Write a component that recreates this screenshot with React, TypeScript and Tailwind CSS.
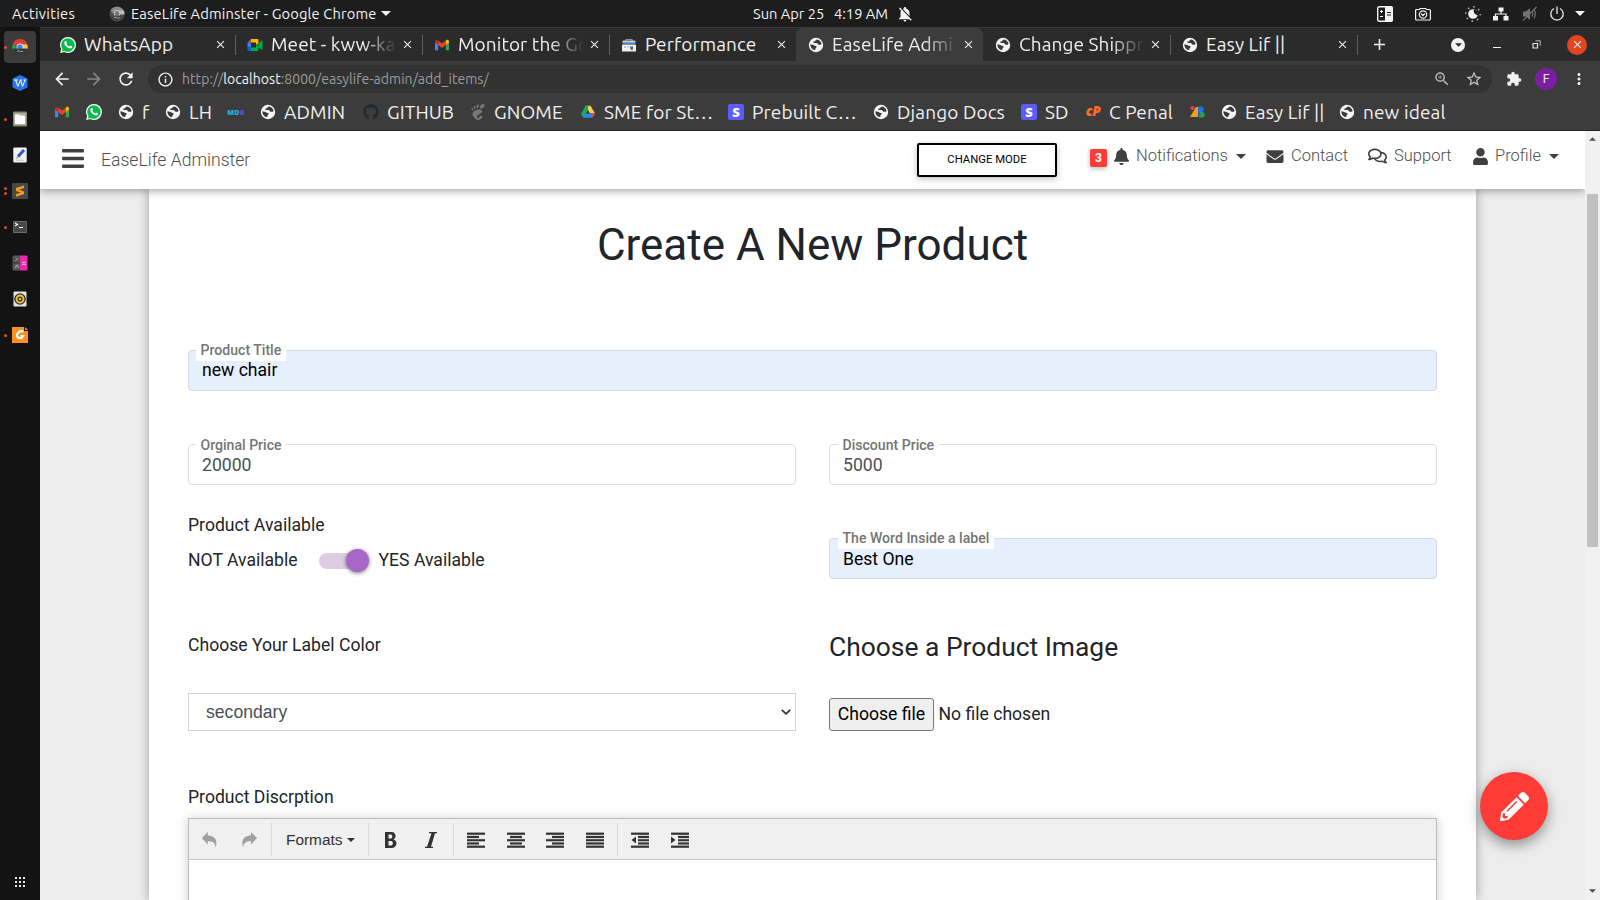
import React from "react";
import {
  MdArrowBack,
  MdArrowForward,
  MdRefresh,
  MdInfoOutline,
  MdZoomIn,
  MdStarBorder,
  MdExtension,
  MdMoreVert,
  MdAdd,
  MdClose,
  MdNotificationsOff,
} from "react-icons/md";
import { FaBars, FaBell, FaEnvelope, FaRegComments, FaUser, FaPencilAlt, FaGithub } from "react-icons/fa";
import { SiGnome } from "react-icons/si";

function Caret({ className }: { className?: string }) {
  return (
    <svg viewBox="0 0 10 5" className={className} fill="currentColor">
      <path d="M0 0h10L5 5z" />
    </svg>
  );
}

function Globe() {
  return (
    <svg viewBox="0 0 16 16" className="h-4 w-4 shrink-0">
      <circle cx="8" cy="8" r="7.2" fill="#f4f4f4" />
      <path d="M9.2 2.4c-1 .2-1.700.5-1.800 1.200.3.700-.8.900-1.600 1-1 .3-.600 1.400.2 1.500h2.600c1.300.2.900 1.600 2.200 1.700h1.700c.700.1 1-.500 1-1.200-.4-2-2.200-3.900-4.300-4.200z" fill="#3a3a3a" />
      <path d="M2.400 7.200c1.500.5 2.900.2 3.900 1.200.7.700 2.300.2 2.400 1.300 0 .9-1.100.9-1.200 1.800 0 .9-.1 1.700-1 1.600-2.400-.5-4.300-3.100-4.100-5.900z" fill="#3a3a3a" />
    </svg>
  );
}

function WhatsApp() {
  return (
    <svg viewBox="0 0 16 16" className="h-4 w-4 shrink-0">
      <path d="M8 0a8 8 0 0 1 0 16c-1.400 0-2.600-.3-3.700-.9L.2 16l1-3.900A8 8 0 0 1 8 0z" fill="#fff" />
      <path d="M8 1.200a6.800 6.800 0 1 1-3.500 12.700l-2.700.7.700-2.600A6.800 6.800 0 0 1 8 1.200z" fill="#07bc4c" />
      <path d="M5.300 4.100c.5-.4 1-.2 1.200.4l.5 1.200c.1.400-.6.900-.5 1.200.6 1.200 1.500 2 2.700 2.500.4 0 .8-.9 1.200-.8l1.400.7c.4.200.2 1.200-.3 1.600-1 .8-2.400.5-4-.5-1.700-1-3.200-3-3.200-4.500 0-.8.500-1.500 1-1.800z" fill="#fff" />
    </svg>
  );
}

function Gmail() {
  return (
    <svg viewBox="0 0 16 16" className="h-4 w-4 shrink-0">
      <path d="M1 4v9.300h3.200V7z" fill="#3f86f5" />
      <path d="M15 4v9.300h-3.200V7z" fill="#32a753" />
      <path d="M1 4.600C1 2.800 2.800 2.300 4.200 3.400V8L1 5.600z" fill="#c6221f" />
      <path d="M15 4.600c0-1.800-1.800-2.300-3.200-1.200V8L15 5.600z" fill="#fbbc04" />
      <path d="M4.200 3.600L8 6.500l3.800-2.900V8L8 10.900 4.200 8z" fill="#ea4335" />
    </svg>
  );
}

function Meet() {
  return (
    <svg viewBox="0 0 16 16" className="h-4 w-4 shrink-0">
      <path d="M4 2L0.500 5.500H4z" fill="#ea4335" />
      <path d="M4 2h6.500a1 1 0 0 1 1 1v4L9 8V5.500H4z" fill="#fbbc04" />
      <path d="M.5 5.500H4v5H.5z" fill="#2684fc" />
      <path d="M.5 10.500H4V14H1.500a1 1 0 0 1-1-1z" fill="#0066da" />
      <path d="M4 10.500h5V8l2.500-1 3-3.500c.4-.2 1 0 1 .5v8c0 .5-.6.700-1 .4L11.500 10v3a1 1 0 0 1-1 1H4z" fill="#00ac47" />
      <path d="M11.500 6v4L9 8z" fill="#00832d" />
    </svg>
  );
}

function Console() {
  return (
    <svg viewBox="0 0 16 16" className="h-4 w-4 shrink-0">
      <path d="M5 4V2.500h6V4" stroke="#8a8f94" strokeWidth="1.200" fill="none" />
      <rect x="1.500" y="3.500" width="13" height="3" rx="1" fill="#c6cacd" />
      <rect x="2" y="5.500" width="12" height="1.500" fill="#3c87dc" />
      <rect x="1" y="7.500" width="14" height="7" rx=".5" fill="#eef0f1" />
      <path d="M4 9v2M7 9v1.500" stroke="#97a4ae" />
      <path d="M9 9l2 1 1-1v3l-1 1.500L9.500 12z" fill="#4d5a64" />
    </svg>
  );
}

function Drive() {
  return (
    <svg viewBox="0 0 16 16" className="h-4 w-4 shrink-0">
      <path d="M5.500 1.800h5L15 9.600h-5z" fill="#ffcf48" />
      <path d="M3.500 9.600H15l-2.400 4.200H3.300L1 9.700z" fill="#2f86f6" />
      <path d="M1 9.700L5.500 1.800h2.700v4.600L3.400 13.800z" fill="#1fa463" />
      <path d="M10.800 9.600H15l-2.400 4.200z" fill="#ea4335" />
      <path d="M8 6.500l1.800 3.100H6.200z" fill="#3c3c3c" />
    </svg>
  );
}

function SBadge() {
  return (
    <span className="flex h-4 w-4 shrink-0 items-center justify-center rounded-[2px] bg-[#5b5bff] font-['Noto_Sans',sans-serif] text-[13px] leading-none font-black text-white">
      S
    </span>
  );
}

function Mdb() {
  return (
    <span className="flex h-4 w-4 shrink-0 items-center justify-center font-['Noto_Sans',sans-serif] text-[7px] leading-none font-black tracking-[0.3px] text-[#19b5dd]">
      MD<span className="text-[#5a4fcf]">B</span>
    </span>
  );
}

function CPanel() {
  return (
    <span className="flex h-4 w-4 shrink-0 items-center justify-center font-['Noto_Sans',sans-serif] text-[13.500px] leading-none font-black tracking-[-0.300px] text-[#ff6c2c] italic">
      cP
    </span>
  );
}

function Zb() {
  return (
    <svg viewBox="0 0 16 16" className="h-4 w-4 shrink-0">
      <circle cx="2.500" cy="4" r="2" fill="#e8443a" />
      <path d="M0 13L6 3h2v10z" fill="#f79a1c" />
      <path d="M8 2.500h3.500a2.800 2.800 0 0 1 0 5.500H8z" fill="#1a73e8" />
      <path d="M9 8h3a2.700 2.700 0 0 1 0 5.500H9z" fill="#2aa24a" />
      <path d="M8 8l3 2-3 3z" fill="#1565c0" />
    </svg>
  );
}

function ChromeDev({ grey }: { grey?: boolean }) {
  return grey ? (
    <svg viewBox="0 0 16 16" className="h-4 w-4 shrink-0">
      <circle cx="8" cy="8" r="7.500" fill="#505050" />
      <path d="M1.500 4.500a7.500 7.500 0 0 1 13 0l.8 2.500H4z" fill="#8c8c8c" />
      <path d="M8 4.500h7a7 7 0 0 1 .3 4H11z" fill="#bcbcbc" />
      <circle cx="8" cy="7.500" r="3.200" fill="#d0d0d0" />
      <circle cx="8" cy="7.500" r="2.400" fill="#777" />
      <path d="M1.200 9.500h13.600a7 7 0 0 1-13.600 0z" fill="#444" />
      <path d="M5.500 11.500h2M8.500 11.500l1 1 1-1" stroke="#ddd" strokeWidth=".8" fill="none" />
    </svg>
  ) : (
    <svg viewBox="0 0 16 16" className="h-4 w-4 shrink-0">
      <path d="M1 4.500a7.700 7.700 0 0 1 14 0v2H3z" fill="#dc4034" />
      <path d="M1 4.500L5 9l-1 2H.5a8 8 0 0 1 .5-6.500z" fill="#2da14e" />
      <path d="M9 5.500h6.300a8 8 0 0 1 .2 4.500H10z" fill="#fcc934" />
      <circle cx="8" cy="8" r="3.500" fill="#f4f4f4" />
      <circle cx="8" cy="8" r="2.800" fill="#4285f4" />
      <path d="M.6 9.500h14.800a7.700 7.700 0 0 1-14.800 0z" fill="#393939" />
      <path d="M5.500 12h2M8.500 12l1 1 1-1" stroke="#eee" strokeWidth=".8" fill="none" />
    </svg>
  );
}

function SystemBar() {
  return (
    <header className="flex h-[27px] shrink-0 items-center bg-[#1d1d1d] pl-3 text-[14.670px] text-[#f2f2f2]">
      <span className="w-[97px] tracking-[0.300px]">Activities</span>
      <ChromeDev grey />
      <span className="ml-1.5 w-[250px] tracking-[0.150px] whitespace-nowrap">EaseLife Adminster - Google Chrome</span>
      <Caret className="h-[5px] w-[10px]" />
      <span className="ml-[362px] w-[81px] whitespace-nowrap">Sun Apr 25</span>
      <span className="w-[62px] whitespace-nowrap">4:19 AM</span>
      <MdNotificationsOff className="h-[18px] w-[18px]" />
      <div className="ml-auto flex items-center pr-[15px]">
        <svg viewBox="0 0 16 16" className="mr-[22px] h-4 w-4">
          <rect x=".7" y=".7" width="14.600" height="14.600" rx="1.500" fill="none" stroke="#f2f2f2" strokeWidth="1.400" />
          <path d="M8 0h6.500L16 1.500v13L14.500 16H8z" fill="#f2f2f2" />
          <path d="M4.500 4v3M3 5.500h3M3 10.500h3" stroke="#f2f2f2" strokeWidth="1" />
          <path d="M10 6.500h4M10 9h4" stroke="#1d1d1d" strokeWidth="1.200" />
        </svg>
        <svg viewBox="0 0 16 16" className="mr-[34px] h-4 w-4" fill="none" stroke="#f2f2f2" strokeWidth="1.200">
          <path d="M1.600 3.500h3l.6-1h5.600l.6 1h3a1 1 0 0 1 1 1V13a1 1 0 0 1-1 1H1.600a1 1 0 0 1-1-1V4.500a1 1 0 0 1 1-1z" />
          <circle cx="8" cy="8.500" r="3.700" />
          <path d="M6.200 7.500l1.800 2 1.800-2" />
        </svg>
        <svg viewBox="0 0 16 16" className="mr-[12px] h-4 w-4">
          <circle cx="8" cy="8" r="4.800" fill="#f2f2f2" />
          <path d="M9 3.300a4 4 0 0 0 4 5.700A5 5 0 0 0 9 3.300z" fill="#1d1d1d" />
          <circle cx="8" cy="8" r="7.200" fill="none" stroke="#bdbdbd" strokeWidth="1.400" strokeDasharray="1.500 4.150" />
        </svg>
        <svg viewBox="0 0 16 16" className="mr-[13px] h-4 w-4" fill="#f2f2f2">
          <path d="M5.500 1.500h5v4h-5zM0 10h5v4.500H0zM10.500 10h5v4.500h-5z" />
          <path d="M8 5v3M2.500 10V8H13v2" fill="none" stroke="#f2f2f2" strokeWidth="1.200" />
        </svg>
        <svg viewBox="0 0 16 16" className="mr-[11px] h-4 w-4" fill="#737373">
          <path d="M1 5.500h3L8 2v12l-4-3.500H1z" />
          <path d="M10 5.500q1.500 2.500 0 5M12 3.500q2.700 4.500 0 9M1 14.500L14.500 1" fill="none" stroke="#737373" strokeWidth="1.200" />
        </svg>
        <svg viewBox="0 0 16 16" className="mr-[10px] h-4 w-4" fill="none" stroke="#e8e8e8" strokeWidth="1.300">
          <path d="M5 2.500a6.200 6.200 0 1 0 6 0M8 .5V8" />
        </svg>
        <Caret className="h-[5px] w-[10px]" />
      </div>
    </header>
  );
}

function DockItem({ dots = 0, active, children }: { dots?: number; active?: boolean; children: React.ReactNode }) {
  return (
    <div className="flex h-9 items-center">
      <div className="flex w-1 shrink-0 justify-end">
        <div className="relative z-10 -mr-[3px] flex flex-col gap-[2px]">
          {dots > 0 && <i className="h-[3px] w-[3px] rounded-full bg-[#e4521f]" />}
          {dots > 1 && <i className="h-[3px] w-[3px] rounded-full bg-[#e4521f]" />}
        </div>
      </div>
      <div className={active ? "flex h-8 w-8 items-center justify-center rounded-[4px] bg-[#3b3b3b]" : "flex h-8 w-8 items-center justify-center"}>
        {children}
      </div>
    </div>
  );
}

function Dock() {
  return (
    <aside className="flex w-10 shrink-0 flex-col bg-[#131313] pt-[2px]">
      <DockItem dots={1} active>
        <ChromeDev />
      </DockItem>
      <DockItem>
        <svg viewBox="0 0 16 16" className="h-4 w-4">
          <path d="M8 0l7.500 3.500v9L8 16 .5 12.500v-9z" fill="#2a74e8" />
          <path d="M2 5h4M3.600 5l2.200 6.300L8.500 5l2 6.300L13 5M8 5h2M11.500 5H14" fill="none" stroke="#fff" strokeWidth="1" />
        </svg>
      </DockItem>
      <DockItem dots={1}>
        <svg viewBox="0 0 16 16" className="h-4 w-4">
          <rect x="1" y=".5" width="14" height="15" rx="1" fill="#8d8675" />
          <rect x="2" y="2" width="12" height="12" fill="#b5ae9c" />
          <path d="M3 4.500a1 1 0 0 1 1-1h3l1 1h4a1 1 0 0 1 1 1V12a1 1 0 0 1-1 1H4a1 1 0 0 1-1-1z" fill="#fafafa" />
        </svg>
      </DockItem>
      <DockItem>
        <svg viewBox="0 0 16 16" className="h-4 w-4">
          <rect x="1.300" y=".5" width="13.400" height="15" rx="1" fill="#f1f1f1" />
          <path d="M12 3L6 9.500" stroke="#2659d8" strokeWidth="3" />
          <path d="M5.500 9L3.500 12l3-1.300z" fill="#a8977c" />
          <path d="M4 13.300h8" stroke="#c8c8c8" />
        </svg>
      </DockItem>
      <DockItem dots={2}>
        <svg viewBox="0 0 16 16" className="h-4 w-4">
          <rect width="16" height="16" rx="1" fill="#494949" />
          <path d="M12 2.500L4 5v3l5 1.500-5 1.700v2.500l8-2.600V8.500L7 6.800l5-1.700z" fill="#ff9a1a" />
        </svg>
      </DockItem>
      <DockItem dots={1}>
        <svg viewBox="0 0 16 16" className="h-4 w-4">
          <rect x="1" y="2" width="14" height="12" rx="1" fill="#6c6c6c" />
          <rect x="1.700" y="3" width="12.600" height="10" fill="#474747" />
          <path d="M3 4l2.500 1.500L3 7M7 8.500h4" fill="none" stroke="#fff" strokeWidth="1.100" />
        </svg>
      </DockItem>
      <DockItem>
        <svg viewBox="0 0 16 16" className="h-4 w-4">
          <rect x=".5" y=".5" width="8" height="15" rx="1" fill="#565656" />
          <path d="M8 .5h6.500a1 1 0 0 1 1 1v13a1 1 0 0 1-1 1H8z" fill="#e52baa" />
          <path d="M.5 8H8" stroke="#333" />
          <path d="M10 7.300h4M10 9.300h4" stroke="#f9b3e2" />
          <path d="M5.800 3L3.500 5.800M3 12.500h1v-2.200h2v2.200h1" fill="none" stroke="#bbb" strokeWidth=".8" />
        </svg>
      </DockItem>
      <DockItem>
        <svg viewBox="0 0 16 16" className="h-4 w-4">
          <rect x="1.500" y=".5" width="13" height="15" rx="1" fill="#e6e4dc" />
          <circle cx="8" cy="8" r="5.800" fill="#2f2f2f" />
          <circle cx="8" cy="8" r="3.500" fill="none" stroke="#ebc331" strokeWidth="1.900" />
          <circle cx="8" cy="8" r="1.300" fill="#ebc331" />
        </svg>
      </DockItem>
      <DockItem dots={1}>
        <svg viewBox="0 0 16 16" className="h-4 w-4">
          <path d="M0 0h12v4h4v12H0z" fill="#ff8f1f" />
          <path d="M13 0l3 3h-3z" fill="#ff8f1f" />
          <path d="M11.500 4.500C8 3.500 5 5.500 5 8.300c0 3.500 4.500 4 6 .7H8.500" fill="none" stroke="#fff" strokeWidth="2.200" />
        </svg>
      </DockItem>
      <div className="mt-auto mb-[13px] grid grid-cols-3 gap-[2px] self-center">
        {Array.from({ length: 9 }, (_, i) => (
          <i key={i} className="h-[2px] w-[2px] bg-[#e6e6e6]" />
        ))}
      </div>
    </aside>
  );
}

type Tab = { icon: React.ReactNode; title: string; fade?: boolean; active?: boolean; sep?: boolean };

const tabs: Tab[] = [
  { icon: <WhatsApp />, title: "WhatsApp", sep: true },
  { icon: <Meet />, title: "Meet - kww-ka", fade: true, sep: true },
  { icon: <Gmail />, title: "Monitor the Go", fade: true, sep: true },
  { icon: <Console />, title: "Performance" },
  { icon: <Globe />, title: "EaseLife Admi", fade: true, active: true },
  { icon: <Globe />, title: "Change Shippr", fade: true, sep: true },
  { icon: <Globe />, title: "Easy Lif ||", sep: true },
];

function TabStrip() {
  return (
    <div className="flex h-[34px] items-center border-t border-[#3a3a3a] bg-[#2b2b2b] pl-2 text-[19px] tracking-[0.080px] text-[#efefef]">
      {tabs.map((t) => (
        <div
          key={t.title}
          className={
            t.active
              ? "flex h-[34px] w-[187px] shrink-0 items-center rounded-t-[7px] bg-[#3c3c3c] pl-3"
              : "flex h-[34px] w-[187px] shrink-0 items-center pl-3"
          }
        >
          {t.icon}
          <span
            className={
              t.fade
                ? "ml-2 w-[130px] shrink-0 whitespace-nowrap [mask-image:linear-gradient(to_right,#000_92px,transparent_126px)]"
                : "ml-2 w-[130px] shrink-0 whitespace-nowrap"
            }
          >
            {t.title}
          </span>
          <MdClose className="h-[13px] w-[13px] shrink-0" />
          {t.sep && <i className="-mr-px ml-auto h-5 w-px bg-[#606060]" />}
        </div>
      ))}
      <MdAdd className="ml-[13px] h-[19px] w-[19px]" />
      <div className="ml-auto flex items-center pr-[13px]">
        <span className="mr-[28px] flex h-[14px] w-[14px] items-center justify-center rounded-full bg-[#f4f4f4] text-[#2b2b2b]">
          <Caret className="h-[4px] w-[7px]" />
        </span>
        <i className="mt-[5px] mr-[31px] h-px w-[8px] bg-[#f2f2f2]" />
        <svg viewBox="0 0 9 9" className="mr-[26px] h-[9px] w-[9px]" fill="none" stroke="#e0e0e0">
          <path d="M1 3.500h4.500V8H1z" strokeWidth="1.200" />
          <path d="M3.500.8h4.700v5" strokeWidth=".8" />
        </svg>
        <span className="flex h-5 w-5 items-center justify-center rounded-full bg-[#e3461f]">
          <MdClose className="h-[13px] w-[13px]" />
        </span>
      </div>
    </div>
  );
}

function AddressBar() {
  return (
    <div className="flex h-[33px] items-center bg-[#3c3c3c] pt-[3px] text-[#f0f0f0]">
      <MdArrowBack className="ml-[12px] h-5 w-5" />
      <MdArrowForward className="ml-3 h-5 w-5 text-[#868686]" />
      <MdRefresh className="ml-3 h-5 w-5" />
      <div className="ml-3 flex h-7 w-[1344px] items-center rounded-full bg-[#323232] pl-[9px]">
        <MdInfoOutline className="h-[17px] w-[17px]" />
        <span className="ml-[8px] text-[14px] tracking-[0.050px] whitespace-nowrap text-[#9b9b9b]">
          http://<span className="text-[#f4f4f4]">localhost</span>:8000/easylife-admin/add_items/
        </span>
        <MdZoomIn className="mr-[14px] ml-auto h-[18px] w-[18px] text-[#b5b5b5]" />
        <MdStarBorder className="mr-[9px] h-[18px] w-[18px] text-[#c8c8c8]" />
      </div>
      <MdExtension className="ml-[14px] h-4 w-4" />
      <span className="ml-[13px] flex h-[22px] w-[22px] items-center justify-center rounded-full bg-[#7b1fa2] font-[Roboto,sans-serif] text-[12px]">F</span>
      <MdMoreVert className="ml-[13px] h-[18px] w-[18px]" />
    </div>
  );
}

const bookmarks: { icon: React.ReactNode; label?: string; w: string }[] = [
  { icon: <Gmail />, w: "w-[32px]" },
  { icon: <WhatsApp />, w: "w-[32px]" },
  { icon: <Globe />, label: "f", w: "w-[47px]" },
  { icon: <Globe />, label: "LH", w: "w-[63px]" },
  { icon: <Mdb />, w: "w-[32px]" },
  { icon: <Globe />, label: "ADMIN", w: "w-[103px]" },
  { icon: <FaGithub className="h-4 w-4 shrink-0 text-[#24292e]" />, label: "GITHUB", w: "w-[107px]" },
  { icon: <SiGnome className="h-4 w-4 shrink-0 text-[#777]" />, label: "GNOME", w: "w-[110px]" },
  { icon: <Drive />, label: "SME for St…", w: "w-[148px]" },
  { icon: <SBadge />, label: "Prebuilt C…", w: "w-[145px]" },
  { icon: <Globe />, label: "Django Docs", w: "w-[148px]" },
  { icon: <SBadge />, label: "SD", w: "w-[64px]" },
  { icon: <CPanel />, label: "C Penal", w: "w-[105px]" },
  { icon: <Zb />, w: "w-[31px]" },
  { icon: <Globe />, label: "Easy Lif ||", w: "w-[118px]" },
  { icon: <Globe />, label: "new ideal", w: "w-[110px]" },
];

function Bookmarks() {
  return (
    <div className="flex h-[37px] items-center border-b border-[#222] bg-[#3c3c3c] pl-[14px] text-[19px] tracking-[0.120px] text-[#efefef]">
      {bookmarks.map((b, i) => (
        <div key={i} className={`flex shrink-0 items-center gap-2 whitespace-nowrap ${b.w}`}>
          {b.icon}
          {b.label && <span>{b.label}</span>}
        </div>
      ))}
    </div>
  );
}

function Navbar() {
  return (
    <nav className="relative z-10 flex h-[58px] shrink-0 items-start bg-white pl-[22px] text-[16.500px] font-light text-[#4f4f4f] shadow-[0_2px_8px_rgba(0,0,0,0.35)]">
      <FaBars className="mt-[15px] h-[25px] w-[22px] text-[#404040]" />
      <span className="mt-[15px] ml-[17px] w-[816px] text-[17.600px] leading-[28px]">EaseLife Adminster</span>
      <button className="mt-3 h-[34px] w-[140px] rounded-[2px] border-2 border-black text-[11.300px] leading-[28px] font-normal text-black shadow-[0_2px_6px_rgba(0,0,0,0.25)]">
        CHANGE MODE
      </button>
      <span className="mt-[18px] ml-[33px] flex h-[18px] w-[17px] items-center justify-center rounded-[2px] bg-[#ff3b37] text-[12px] font-bold text-white shadow-[0_2px_5px_rgba(0,0,0,0.25)]">3</span>
      <div className="mt-[13px] flex h-6 items-center">
        <FaBell className="ml-[7px] h-[17px] w-[15px] text-[#404040]" />
        <span className="mt-px ml-[7px] w-[100px]">Notifications</span>
        <Caret className="h-[5px] w-[10px] text-[#404040]" />
        <FaEnvelope className="mt-px ml-5 h-[17px] w-[18px] text-[#404040]" />
        <span className="mt-px ml-[7px] w-[77px]">Contact</span>
        <FaRegComments className="h-[18px] w-[19px] text-[#404040]" />
        <span className="mt-px ml-[7px] w-[79px]">Support</span>
        <FaUser className="h-[17px] w-[15px] text-[#404040]" />
        <span className="mt-px ml-[7px] w-[54px]">Profile</span>
        <Caret className="h-[5px] w-[10px] text-[#404040]" />
      </div>
    </nav>
  );
}

type FieldProps = { label: string; value: string; filled?: boolean; padTop: string; labelBox: string };

function Field({ label, value, filled, padTop, labelBox }: FieldProps) {
  return (
    <div
      className={`relative h-[41px] rounded-[4px] border pl-[13px] text-[17.600px] leading-[24px] ${padTop} ${
        filled ? "border-[#d5dae1] bg-[#e6effc] text-black" : "border-[#dcdcdc] bg-white text-[#495057]"
      }`}
    >
      {value}
      <span
        className={`absolute h-[21px] bg-white pl-[4.500px] text-[14.080px] leading-[21px] font-medium whitespace-nowrap text-[#757575] ${labelBox}`}
      >
        {label}
      </span>
    </div>
  );
}

function Lines({ rows }: { rows: [number, number][] }) {
  return (
    <g>
      {rows.map(([x, w], i) => (
        <g key={i}>
          <rect x={x} y={i * 3.25} width={w} height="3" fill="#c9c9c9" />
          <rect x={x} y={i * 3.25 + 0.75} width={w} height="2" fill="#333" />
        </g>
      ))}
    </g>
  );
}

function Tool({ children }: { children: React.ReactNode }) {
  return (
    <svg viewBox="0 0 18 16" className="h-4 w-[18px] shrink-0">
      {children}
    </svg>
  );
}

function Editor() {
  return (
    <div className="h-[90px] border border-[#bcbcbc] bg-white shadow-[0_1px_10px_rgba(0,0,0,0.2)]">
      <div className="flex h-[41px] items-center border-b border-[#c4c4c4] bg-[#f0f0f0] pt-px">
        <div className="flex h-[33px] w-[83px] items-center gap-[21px] border-r border-[#d8d8d8] pl-[12px]">
          <Tool>
            <path d="M.8 6L6.800 0v3.500C13 3.500 17.500 7.500 14.500 16c.2-5-2.500-6.500-7.700-7v3.500z" fill="#a0a0a0" />
          </Tool>
          <Tool>
            <path d="M17 6L11 0v3.500C4.800 3.500.3 7.500 3.300 16c-.2-5 2.500-6.500 7.700-7v3.500z" fill="#a0a0a0" />
          </Tool>
        </div>
        <div className="flex h-[33px] w-[97px] items-center border-r border-[#d8d8d8] pl-[14px] font-['Liberation_Sans',Arial,sans-serif] text-[15.400px] text-[#333]">
          Formats
          <Caret className="ml-[5px] h-[4px] w-[8px]" />
        </div>
        <div className="flex h-[33px] w-[85px] items-center gap-[22px] border-r border-[#d8d8d8] pl-[13px]">
          <Tool>
            <path fillRule="evenodd" d="M3 0h6.500c5 0 5 6 2 7.500 4.500 1 4 8.500-2 8.500H3zM6.500 2.500v4h2.300c2 0 2-4 0-4zM6.500 9v4.500H9c2.500 0 2.500-4.500 0-4.500z" fill="#333" />
          </Tool>
          <Tool>
            <path d="M7 0h8v1.300h-2L9 14.700h2V16H3v-1.300h2L9.500 1.300H7z" fill="#333" />
          </Tool>
        </div>
        <div className="flex h-[33px] w-[164px] items-center gap-[21.500px] border-r border-[#d8d8d8] pl-[13px]">
          <Tool>
            <Lines rows={[[0, 18], [0, 12], [0, 18], [0, 12], [0, 18]]} />
          </Tool>
          <Tool>
            <Lines rows={[[0, 18], [3, 12], [0, 18], [3, 12], [0, 18]]} />
          </Tool>
          <Tool>
            <Lines rows={[[0, 18], [6, 12], [0, 18], [6, 12], [0, 18]]} />
          </Tool>
          <Tool>
            <Lines rows={[[0, 18], [0, 18], [0, 18], [0, 18], [0, 18]]} />
          </Tool>
        </div>
        <div className="flex items-center gap-[22px] pl-[13px]">
          <Tool>
            <Lines rows={[[0, 18], [7, 11], [7, 11], [7, 11], [0, 18]]} />
            <path d="M5 4.500v7L.5 8z" fill="#333" />
          </Tool>
          <Tool>
            <Lines rows={[[0, 18], [7, 11], [7, 11], [7, 11], [0, 18]]} />
            <path d="M0 4.500v7L4.500 8z" fill="#333" />
          </Tool>
        </div>
      </div>
    </div>
  );
}

function ProductForm() {
  return (
    <section className="ml-[109px] h-full w-[1327px] bg-white px-[39px] pt-[30px] text-[17.600px] leading-[26px] text-[#212529] shadow-[0_0_10px_rgba(0,0,0,0.35)]">
      <h1 className="h-[131px] text-center text-[44px] leading-[53px]">Create A New Product</h1>
      <Field label="Product Title" value="new chair" filled padTop="pt-[7px]" labelBox="-top-[11px] left-[7px] w-[90px]" />
      <div className="mt-[53px] grid grid-cols-2 gap-x-[33px]">
        <div>
          <Field label="Orginal Price" value="20000" padTop="pt-[8px]" labelBox="-top-[10px] left-[7px] w-[90px]" />
          <p className="mt-[27px]">Product Available</p>
          <div className="mt-[9px] flex items-center">
            <span className="w-[131px]">NOT Available</span>
            <span className="relative mt-[2px] h-4 w-[46px] rounded-full bg-[#dccde3]">
              <i className="absolute -top-[4px] left-[27px] h-[23px] w-[23px] rounded-full bg-[#a866c9] shadow-[0_1px_4px_rgba(0,0,0,0.5)]" />
            </span>
            <span className="ml-[13.500px]">YES Available</span>
          </div>
          <p className="mt-[59px]">Choose Your Label Color</p>
          <div className="mt-[35px] flex h-[38px] items-center justify-between border border-[#ced4da] pr-[4px] pl-[17px] font-['Liberation_Sans',Arial,sans-serif] text-[#495057]">
            secondary
            <svg viewBox="0 0 10 6" className="h-[6px] w-[10px]" fill="none" stroke="#333" strokeWidth="1.800">
              <path d="M.8.8L5 4.800 9.200.8" />
            </svg>
          </div>
        </div>
        <div>
          <Field label="Discount Price" value="5000" padTop="pt-[8px]" labelBox="-top-[10px] left-[8px] w-[101px]" />
          <div className="h-[53px]" />
          <Field label="The Word Inside a label" value="Best One" filled padTop="pt-[8px]" labelBox="-top-[11px] left-[8px] w-[156px]" />
          <h4 className="mt-[52px] text-[26.400px] leading-[32px]">Choose a Product Image</h4>
          <div className="mt-[35px] flex items-center">
            <button className="h-[33px] w-[105px] rounded-[3px] border border-[#767676] bg-[#efefef] pb-[2px] text-black">Choose file</button>
            <span className="mb-[2px] ml-[4.500px]">No file chosen</span>
          </div>
        </div>
      </div>
      <p className="mt-[53px] mb-[8px]">Product Discrption</p>
      <Editor />
    </section>
  );
}

export default function App() {
  return (
    <div className="flex h-[900px] w-[1600px] flex-col overflow-hidden bg-[#ededed] font-[Ubuntu,'Noto_Sans',sans-serif]">
      <SystemBar />
      <div className="flex min-h-0 flex-1">
        <Dock />
        <div className="flex min-w-0 flex-1 flex-col">
          <TabStrip />
          <AddressBar />
          <Bookmarks />
          <div className="relative flex min-h-0 flex-1 font-[Roboto,sans-serif]">
            <main className="flex w-[1545px] flex-col overflow-hidden bg-[#ededed]">
              <Navbar />
              <div className="min-h-0 flex-1 overflow-hidden">
                <ProductForm />
              </div>
            </main>
            <div className="flex w-[15px] flex-col items-center bg-[#f1f1f1] pt-[6px] pb-[7px] text-[#505050]">
              <Caret className="h-[4px] w-[7px] rotate-180" />
              <i className="mt-[53px] h-[353px] w-[11px] bg-[#c1c1c1]" />
              <Caret className="mt-auto h-[4px] w-[7px]" />
            </div>
            <button className="absolute top-[641px] left-[1440px] z-20 flex h-[68px] w-[68px] items-center justify-center rounded-full bg-[#ff3b37] text-white shadow-[0_5px_14px_rgba(0,0,0,0.4)]">
              <FaPencilAlt className="h-[29px] w-[29px]" />
            </button>
          </div>
        </div>
      </div>
    </div>
  );
}
